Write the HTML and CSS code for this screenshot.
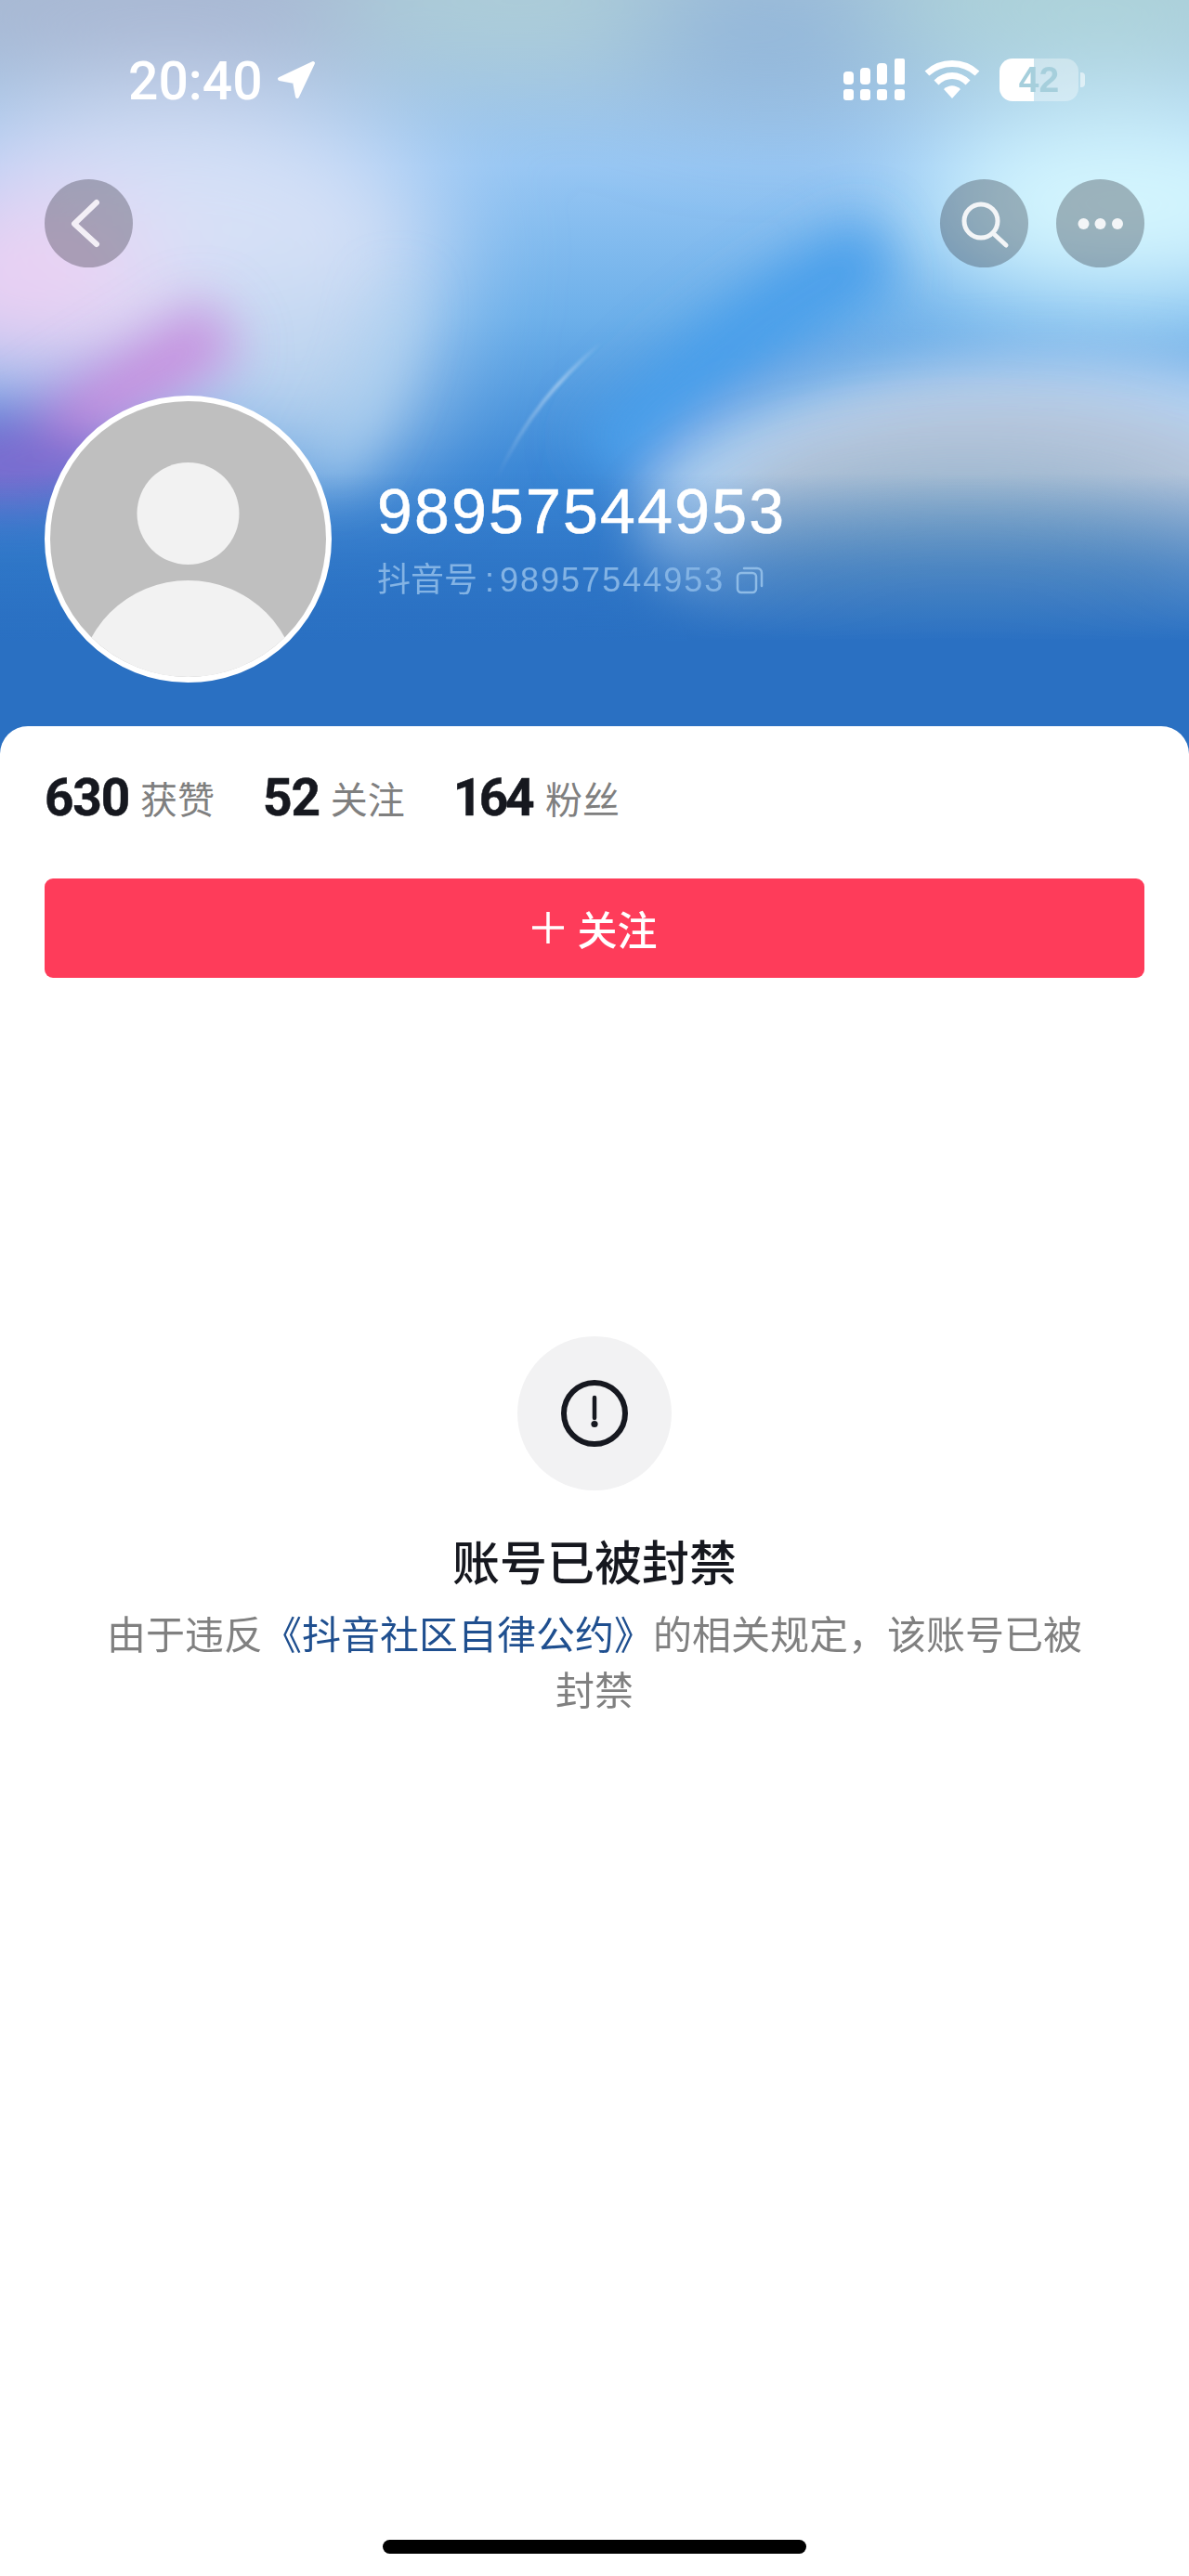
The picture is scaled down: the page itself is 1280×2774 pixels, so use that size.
FILE: index.html
```html
<!DOCTYPE html>
<html>
<head>
  <meta charset="UTF-8">
  <title>账号已被封禁</title>
  <link rel="stylesheet" href="styles.css">
</head>
<body>
  <div class="page">
    <!-- Header with blurred cover picture -->
    <div class="hero">
      <svg class="cover" viewBox="0 0 1280 812" preserveAspectRatio="none">
        <defs>
          <linearGradient id="base" x1="0" y1="0" x2="0" y2="1">
            <stop offset="0" stop-color="#a6c2da"/>
            <stop offset="0.22" stop-color="#97c6f3"/>
            <stop offset="0.42" stop-color="#6db0ea"/>
            <stop offset="0.62" stop-color="#3c88d6"/>
            <stop offset="1" stop-color="#2a70c2"/>
          </linearGradient>
          <linearGradient id="fade" x1="0" y1="0" x2="0" y2="1">
            <stop offset="0" stop-color="#2a70c2" stop-opacity="0"/>
            <stop offset="0.55" stop-color="#2a70c2" stop-opacity="0.6"/>
            <stop offset="1" stop-color="#2a70c2"/>
          </linearGradient>
          <linearGradient id="streak" gradientUnits="userSpaceOnUse" x1="535" y1="515" x2="648" y2="368">
            <stop offset="0" stop-color="#fff" stop-opacity="0"/>
            <stop offset="0.65" stop-color="#fff" stop-opacity="0.4"/>
            <stop offset="1" stop-color="#fff" stop-opacity="0"/>
          </linearGradient>
          <filter id="blurBig" x="-50%" y="-80%" width="200%" height="260%"><feGaussianBlur stdDeviation="60"/></filter>
          <filter id="blurMid" x="-50%" y="-80%" width="200%" height="260%"><feGaussianBlur stdDeviation="28"/></filter>
          <filter id="blurThin" x="-50%" y="-50%" width="200%" height="200%"><feGaussianBlur stdDeviation="1.5"/></filter>
        </defs>
        <rect width="1280" height="812" fill="url(#base)"/>
        <g filter="url(#blurBig)">
          <ellipse cx="190" cy="270" rx="290" ry="170" fill="#d7e1f7"/>
          <ellipse cx="10" cy="310" rx="160" ry="110" fill="#ead0f3"/>
          <ellipse cx="330" cy="410" rx="130" ry="100" fill="#bcd4ef"/>
          <ellipse cx="1210" cy="220" rx="230" ry="110" fill="#d6f7fe"/>
          <ellipse cx="170" cy="10" rx="360" ry="70" fill="#a9b6d2"/>
          <ellipse cx="560" cy="0" rx="210" ry="60" fill="#aed0d8"/>
          <ellipse cx="830" cy="40" rx="150" ry="60" fill="#8fb4d8"/>
          <ellipse cx="1170" cy="0" rx="240" ry="70" fill="#aed6da"/>
        </g>
        <g filter="url(#blurMid)">
          <path d="M950 270 C850 320 760 380 650 500" stroke="#4a9fea" stroke-width="80" fill="none"/>
          <ellipse cx="1130" cy="570" rx="440" ry="190" fill="#b5d3f2"/>
          <ellipse cx="1080" cy="550" rx="290" ry="125" fill="#b9c7dd"/>
          <path d="M430 310 C420 380 400 450 350 520" stroke="#b8d8f3" stroke-width="30" fill="none" opacity="0.8"/>
          <path d="M240 350 C170 400 110 430 50 470" stroke="#c68ede" stroke-width="70" fill="none"/>
          <ellipse cx="10" cy="500" rx="110" ry="50" fill="#7c6ccf"/>
        </g>
        <g filter="url(#blurBig)">
          <ellipse cx="1040" cy="640" rx="290" ry="110" fill="#7ea6bf"/>
        </g>
        <rect y="510" width="1280" height="180" fill="url(#fade)"/>
        <rect y="690" width="1280" height="122" fill="#2a70c2"/>
        <path d="M535 515 C565 450 600 410 648 368" stroke="url(#streak)" stroke-width="4" fill="none" filter="url(#blurThin)"/>
      </svg>

      <div class="status-bar">
        <div class="status-left">
          <span class="time">20:40</span>
          <svg class="location" width="42" height="42" viewBox="0 0 42 42">
            <path d="M39 3 L3 20 L19 23 L22 39 Z" fill="#fff" stroke="#fff" stroke-width="4" stroke-linejoin="round"/>
          </svg>
        </div>
        <div class="status-right">
          <svg width="66" height="46" viewBox="0 0 66 46" fill="#fff">
            <rect x="0" y="14" width="11" height="14" rx="4"/>
            <rect x="18" y="10" width="11" height="18" rx="4"/>
            <rect x="36" y="5" width="11" height="23" rx="4"/>
            <rect x="55" y="0" width="11" height="28" rx="2"/>
            <rect x="0" y="33" width="11" height="12" rx="3"/>
            <rect x="18" y="33" width="11" height="12" rx="3"/>
            <rect x="36" y="33" width="11" height="12" rx="3"/>
            <rect x="55" y="33" width="11" height="12" rx="3"/>
          </svg>
          <svg width="60" height="44" viewBox="0 0 60 44" fill="none" stroke="#fff" stroke-width="7">
            <path d="M3 15 C18 1 42 1 57 15"/>
            <path d="M13 25 C23 15 37 15 47 25"/>
            <path d="M21 32 C27 27 33 27 39 32 L30 42 Z" fill="#fff" stroke="none"/>
          </svg>
          <div class="battery"><span>42</span></div>
        </div>
      </div>

      <div class="nav">
        <button class="round-btn">
          <svg width="95" height="95" viewBox="0 0 95 95" fill="none" stroke="#f3eff6" stroke-width="6" stroke-linecap="round" stroke-linejoin="round">
            <path d="M56 25 L32 48 L56 70"/>
          </svg>
        </button>
        <div class="nav-right">
          <button class="round-btn">
            <svg width="95" height="95" viewBox="0 0 95 95" fill="none" stroke="#f3f5f7" stroke-width="5" stroke-linecap="round">
              <circle cx="44" cy="45" r="18"/>
              <path d="M58 59 L71 71"/>
            </svg>
          </button>
          <button class="round-btn">
            <svg width="95" height="95" viewBox="0 0 95 95" fill="#f3f5f7">
              <circle cx="29.5" cy="48" r="6"/>
              <circle cx="47.5" cy="48" r="6"/>
              <circle cx="66" cy="48" r="6"/>
            </svg>
          </button>
        </div>
      </div>

      <div class="profile">
        <div class="avatar">
          <svg width="297" height="297" viewBox="0 0 297 297" fill="#f2f2f2">
            <circle cx="148.5" cy="121" r="55"/>
            <circle cx="148.5" cy="312" r="119"/>
          </svg>
        </div>
        <div class="profile-text">
          <div class="nickname">98957544953</div>
          <div class="account">
            <span class="account-label">抖音号</span>
            <span class="account-colon">:</span>
            <span class="account-id">98957544953</span>
            <svg width="30" height="30" viewBox="0 0 30 30" fill="none" stroke="#8ebbe6" stroke-width="2.5" stroke-linecap="round">
              <rect x="2" y="7" width="20" height="21" rx="4"/>
              <path d="M9 2 H23 C26 2 28 4 28 7 V21"/>
            </svg>
          </div>
        </div>
      </div>
    </div>

    <!-- White sheet -->
    <div class="sheet">
      <div class="stats">
        <div class="stat"><b>630</b><span>获赞</span></div>
        <div class="stat"><b>52</b><span>关注</span></div>
        <div class="stat tight"><b>164</b><span>粉丝</span></div>
      </div>

      <button class="follow-btn">
        <svg width="34" height="34" viewBox="0 0 34 34" stroke="#fff" stroke-width="3.5">
          <path d="M0 17 H34 M17 0 V34"/>
        </svg>
        <span>关注</span>
      </button>

      <div class="banned">
        <div class="banned-icon">
          <svg width="72" height="72" viewBox="0 0 72 72" fill="none" stroke="#16181f" stroke-width="6">
            <circle cx="36" cy="36" r="33"/>
            <path d="M36 19 V41" stroke-width="4.5" stroke-linecap="round"/>
            <circle cx="36" cy="47.5" r="3.6" fill="#16181f" stroke="none"/>
          </svg>
        </div>
        <h2>账号已被封禁</h2>
        <p>由于违反<a>《抖音社区自律公约》</a>的相关规定，该账号已被封禁</p>
      </div>

      <div class="home-bar"></div>
    </div>
  </div>
</body>
</html>
```

FILE: styles.css
```css
* {
  box-sizing: border-box;
}
body {
  margin: 0;
  font-family: "Liberation Sans", "Noto Sans CJK SC", sans-serif;
  background: #fff;
}
.page {
  display: flex;
  flex-direction: column;
  height: 2774px;
  overflow: hidden;
}

/* header */
.hero {
  position: relative;
  height: 812px;
  padding-top: 63px;
  flex: none;
}
.cover {
  position: absolute;
  top: 0;
  left: 0;
  width: 100%;
  height: 100%;
}
.status-bar, .nav, .profile {
  position: relative;
  display: flex;
}
.status-bar {
  justify-content: space-between;
  height: 46px;
  padding: 0 119px 0 138px;
}
.status-left {
  display: flex;
  align-items: center;
  gap: 15px;
}
.time {
  position: relative;
  top: 2px;
  font-family: Roboto, sans-serif;
  font-weight: 500;
  font-size: 57px;
  line-height: 46px;
  color: #fff;
}
.status-right {
  display: flex;
  align-items: center;
  gap: 21px;
}
.battery {
  position: relative;
  width: 85px;
  height: 46px;
  border-radius: 14px;
  background: linear-gradient(90deg, #fff 43%, rgba(255, 255, 255, 0.35) 43%);
  font-family: "Liberation Sans", sans-serif;
  font-weight: 700;
  font-size: 39px;
  line-height: 46px;
  text-align: center;
  color: #a6cfdc;
}
.battery::after {
  content: "";
  position: absolute;
  top: 15px;
  right: -7px;
  width: 5px;
  height: 16px;
  border-radius: 0 4px 4px 0;
  background: rgba(255, 255, 255, 0.55);
}
.nav {
  justify-content: space-between;
  margin-top: 84px;
  padding: 0 48px;
}
.nav-right {
  display: flex;
  gap: 30px;
}
.round-btn {
  width: 95px;
  height: 95px;
  padding: 0;
  border: none;
  border-radius: 50%;
  background: rgba(30, 30, 40, 0.3);
}
.round-btn svg {
  display: block;
}
.profile {
  margin-top: 138px;
  padding-left: 48px;
  gap: 49px;
}
.avatar {
  flex: none;
  width: 309px;
  height: 309px;
  border: 6px solid #fff;
  border-radius: 50%;
  background: #bfbfbf;
  overflow: hidden;
}
.avatar svg {
  display: block;
}
.profile-text {
  padding-top: 86px;
}
.nickname {
  font-size: 68px;
  line-height: 76px;
  letter-spacing: 2.2px;
  color: #fff;
  -webkit-text-stroke: 0.6px #fff;
}
.account {
  display: flex;
  align-items: center;
  margin-top: 16px;
  font-size: 36px;
  line-height: 42px;
  color: #83b3e4;
}
.account-colon {
  margin: 0 6px 0 8px;
}
.account-id {
  margin-right: 12px;
  letter-spacing: 2px;
}

/* sheet */
.sheet {
  position: relative;
  flex: 1;
  display: flex;
  flex-direction: column;
  margin-top: -30px;
  padding: 0 48px;
  border-radius: 30px 30px 0 0;
  background: #fff;
}
.stats {
  display: flex;
  gap: 52px;
  margin-top: 52px;
}
.stat {
  display: flex;
  align-items: center;
  gap: 12px;
  height: 50px;
}
.stat b {
  font-family: Roboto, sans-serif;
  font-weight: 700;
  font-size: 55px;
  letter-spacing: -1.2px;
  color: #16181f;
  -webkit-text-stroke: 0.5px #16181f;
}
.stat.tight b {
  letter-spacing: -3.5px;
}
.stat.tight {
  gap: 15px;
}
.stat span {
  font-size: 40px;
  color: #7f7f7f;
}
.follow-btn {
  display: flex;
  align-items: center;
  justify-content: center;
  gap: 15px;
  height: 107px;
  margin-top: 62px;
  padding-bottom: 2px;
  border: none;
  border-radius: 9px;
  background: #fe3c5a;
  font-family: "Liberation Sans", "Noto Sans CJK SC", sans-serif;
  font-weight: 500;
  font-size: 43px;
  color: #fff;
}
.banned {
  display: flex;
  flex-direction: column;
  align-items: center;
  margin: 386px -48px 0;
  padding: 0 105px;
  text-align: center;
}
.banned-icon {
  display: flex;
  align-items: center;
  justify-content: center;
  width: 166px;
  height: 166px;
  border-radius: 50%;
  background: #f2f2f3;
}
.banned h2 {
  margin: 47px 0 0;
  font-weight: 500;
  font-size: 51px;
  line-height: 66px;
  color: #16181f;
}
.banned p {
  margin: 14px 0 0;
  font-size: 42px;
  line-height: 60px;
  color: #808080;
}
.banned a {
  color: #1f4f8f;
}
.home-bar {
  align-self: center;
  width: 456px;
  height: 15px;
  margin-top: auto;
  margin-bottom: 24px;
  border-radius: 8px;
  background: #000;
}
```
